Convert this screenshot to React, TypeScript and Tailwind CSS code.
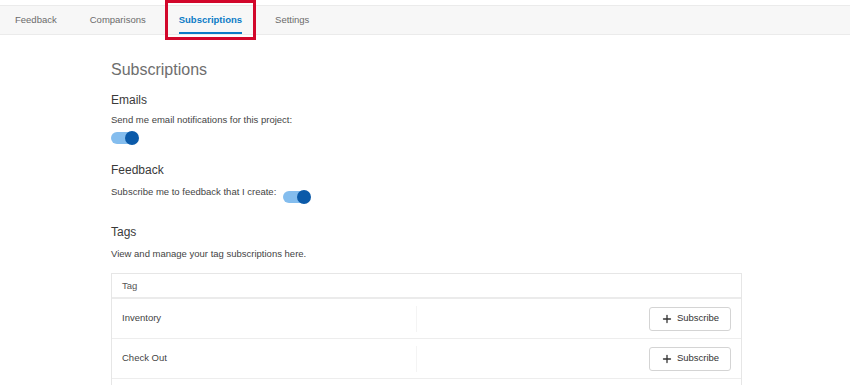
import { Plus } from "lucide-react";

const tabs = ["Feedback", "Comparisons", "Subscriptions", "Settings"];
const tags = ["Inventory", "Check Out", ""];

function Toggle() {
  return (
    <div className="relative h-[14px] w-[28px]">
      <div className="absolute left-0 top-[1px] h-[12px] w-[27px] rounded-full bg-[#84bdee]" />
      <div className="absolute right-0 top-0 h-[14px] w-[14px] rounded-full bg-[#0b5aa9]" />
    </div>
  );
}

export default function App() {
  return (
    <div className="w-[850px] h-[385px] overflow-hidden bg-white font-['Liberation_Sans',Arial,sans-serif]">
      {/* tab bar */}
      <div className="mt-[5px] h-[30px] border-y border-[#ebebeb] bg-[#f7f7f7] flex pl-[15px] gap-[33px]">
        {tabs.map((t) => {
          const active = t === "Subscriptions";
          return (
            <div key={t} className="relative h-[28px]">
              <span
                className={
                  active
                    ? "block text-[9.5px] leading-[28px] font-bold text-[#0b7bc6]"
                    : "block text-[9.5px] leading-[28px] text-[#6b6b6b]"
                }
              >
                {t}
              </span>
              {active && (
                <>
                  <div className="absolute left-0 right-0 bottom-0 h-[2px] bg-[#0b7bc6]" />
                  <div className="absolute -left-[14px] -right-[14px] -top-[6px] h-[40px] border-[3px] border-[#d2072b]" />
                </>
              )}
            </div>
          );
        })}
      </div>

      {/* content */}
      <div className="ml-[111px] w-[631px]">
        <h1 className="mt-[25px] text-[16px] leading-[20px] text-[#6e6e6e]">Subscriptions</h1>

        <h2 className="mt-[12px] text-[12px] leading-[16px] text-[#3a3a3a]">Emails</h2>
        <p className="mt-[5px] text-[9.5px] leading-[14px] text-[#444]">
          Send me email notifications for this project:
        </p>
        <div className="mt-[4px]">
          <Toggle />
        </div>

        <h2 className="mt-[17px] text-[12px] leading-[16px] text-[#3a3a3a]">Feedback</h2>
        <div className="mt-[8px] flex items-start gap-[7px]">
          <p className="text-[9.5px] leading-[12px] text-[#444]">Subscribe me to feedback that I create:</p>
          <div className="mt-[4px]">
            <Toggle />
          </div>
        </div>

        <h2 className="mt-[20px] text-[12px] leading-[16px] text-[#3a3a3a]">Tags</h2>
        <p className="mt-[7px] text-[9.5px] leading-[14px] text-[#444]">
          View and manage your tag subscriptions here.
        </p>

        <div className="mt-[12px] border border-[#e6e6e6]">
          <div className="h-[25px] border-b-2 border-[#ebebeb] px-[10px] text-[9.5px] leading-[23px] text-[#555]">
            Tag
          </div>
          {tags.map((tag, i) => (
            <div key={i} className="flex h-[40px] items-center border-b border-[#ededed] pl-[10px] pr-[10px]">
              <span className="w-[294px] text-[9.5px] text-[#444]">{tag}</span>
              <div className="h-[26px] w-px bg-[#f4f4f4]" />
              <div className="flex-1" />
              <button className="flex h-[24px] w-[82px] items-center justify-center gap-[4px] rounded-[3px] border border-[#d4d4d4] bg-white text-[9.5px] text-[#333]">
                <Plus size={12} strokeWidth={2.6} />
                Subscribe
              </button>
            </div>
          ))}
        </div>
      </div>
    </div>
  );
}
